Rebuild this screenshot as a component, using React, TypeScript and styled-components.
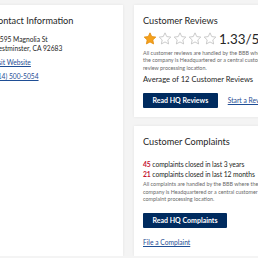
import React from "react";
import styled, { createGlobalStyle } from "styled-components";

const GlobalStyle = createGlobalStyle`
  html, body { margin: 0; padding: 0; }
  body {
    background: #f4f4f4;
    overflow: hidden;
    font-family: Lato, "Liberation Sans", Arial, sans-serif;
    color: #262626;
  }
`;

const Page = styled.div`
  display: flex;
  align-items: stretch;
  gap: 11px;
  padding-top: 5px;
  margin-left: -17px;
  width: 320px;
`;

const Card = styled.section<{ $width: number }>`
  background: #fff;
  box-shadow: 0 0 3px rgba(0, 0, 0, 0.07);
  padding: 10px 9px 9px;
  width: ${(p) => p.$width}px;
  flex: none;
  box-sizing: border-box;
  display: flex;
  flex-direction: column;
  align-items: flex-start;
`;

const Column = styled.div`
  display: flex;
  flex-direction: column;
  gap: 9px;
`;

const Title = styled.h2`
  margin: 0;
  font-size: 9.2px;
  line-height: 11px;
  font-weight: 400;
  color: #262626;
  white-space: nowrap;
`;

const Line = styled.div<{ $mt: number; $lh: number; $size: number; $ls?: number }>`
  margin-top: ${(p) => p.$mt}px;
  font-size: ${(p) => p.$size}px;
  line-height: ${(p) => p.$lh}px;
  letter-spacing: ${(p) => p.$ls ?? 0}px;
  white-space: nowrap;
  color: #262626;
`;

const Link = styled.a<{ $mt?: number }>`
  display: block;
  margin-top: ${(p) => p.$mt ?? 0}px;
  font-size: 6.7px;
  line-height: 9px;
  color: #1f4e95;
  text-decoration: underline;
  white-space: nowrap;
`;

const Fine = styled.p<{ $mt: number }>`
  margin: ${(p) => p.$mt}px 0 0;
  font-size: 5.4px;
  line-height: 7.3px;
  color: #6a6a6a;
  white-space: nowrap;
`;

const RatingRow = styled.div`
  margin-top: 6px;
  display: flex;
  align-items: flex-start;
  height: 13px;
`;

const Stars = styled.div`
  display: flex;
  gap: 1px;
`;

const Score = styled.span`
  margin-left: 2px;
  margin-top: -0.5px;
  font-size: 13.4px;
  line-height: 14px;
  color: #262626;
  white-space: nowrap;
`;

const Actions = styled.div<{ $mt: number }>`
  margin-top: ${(p) => p.$mt}px;
  display: flex;
  align-items: center;
  gap: 10px;
`;

const Button = styled.button`
  height: 15px;
  padding: 0 9.5px;
  border: none;
  border-radius: 1px;
  background: #002b5f;
  color: #fff;
  font-family: Lato, "Liberation Sans", Arial, sans-serif;
  font-weight: 700;
  font-size: 7px;
  line-height: 15px;
  white-space: nowrap;
  cursor: pointer;
`;

const Count = styled.b`
  color: #c4122f;
  font-weight: 700;
`;

const Star = ({ filled }: { filled: boolean }) => (
  <svg width="14" height="13" viewBox="0 0 24 23">
    <path
      d="M12 1.5l3.1 6.6 7.2.9-5.3 5 1.4 7.1L12 17.6l-6.4 3.5 1.4-7.1-5.3-5 7.2-.9z"
      fill={filled ? "#f5a11c" : "#fff"}
      stroke={filled ? "#e08a0c" : "#bdbdbd"}
      strokeWidth="1.4"
      strokeLinejoin="round"
    />
  </svg>
);

export default function App() {
  return (
    <>
      <GlobalStyle />
      <Page>
        <Card $width={140}>
          <Title>Contact Information</Title>
          <Line $mt={8.5} $lh={9} $size={6.7}>15595 Magnolia St</Line>
          <Line $mt={0} $lh={9} $size={6.7}>Westminster, CA 92683</Line>
          <Link $mt={5} href="#">Visit Website</Link>
          <Link $mt={5} href="#">(714) 500-5054</Link>
        </Card>
        <Column>
          <Card $width={150}>
            <Title>Customer Reviews</Title>
            <RatingRow>
              <Stars>
                <Star filled />
                <Star filled={false} />
                <Star filled={false} />
                <Star filled={false} />
                <Star filled={false} />
              </Stars>
              <Score>1.33/5</Score>
            </RatingRow>
            <Fine $mt={5}>
              All customer reviews are handled by the BBB where
              <br />
              the company is Headquartered or a central customer
              <br />
              review processing location.
            </Fine>
            <Line $mt={3.5} $lh={8} $size={7.6}>Average of 12 Customer Reviews</Line>
            <Actions $mt={10}>
              <Button>Read HQ Reviews</Button>
              <Link href="#">Start a Review</Link>
            </Actions>
          </Card>
          <Card $width={150}>
            <Title>Customer Complaints</Title>
            <Line $mt={12} $lh={10} $size={6.75} $ls={-0.08}>
              <Count>45</Count> complaints closed in last 3 years
            </Line>
            <Line $mt={0} $lh={10} $size={6.75} $ls={-0.08}>
              <Count>21</Count> complaints closed in last 12 months
            </Line>
            <Fine $mt={2}>
              All complaints are handled by the BBB where the
              <br />
              company is Headquartered or a central customer
              <br />
              complaint processing location.
            </Fine>
            <Actions $mt={9.7}>
              <Button>Read HQ Complaints</Button>
            </Actions>
            <Link $mt={10} href="#">File a Complaint</Link>
          </Card>
        </Column>
      </Page>
    </>
  );
}
